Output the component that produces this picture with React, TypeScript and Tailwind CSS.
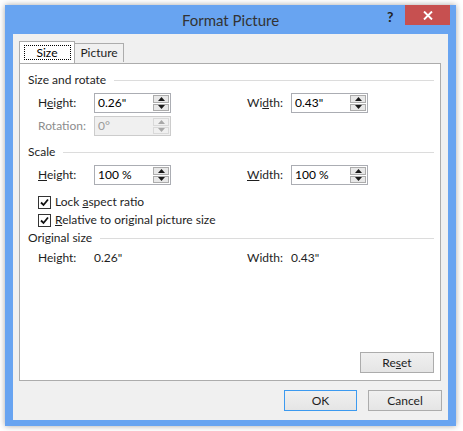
import React from "react";

const font = { fontFamily: 'Lato, "Noto Sans", "Open Sans", sans-serif' };

function Spin({ value, disabled }: { value: string; disabled?: boolean }) {
  return (
    <div
      className={`flex h-[20px] w-[77px] border ${
        disabled ? "border-[#cccccc] bg-[#f0f0f0]" : "border-[#abadb3] bg-white"
      }`}
    >
      <div
        className={`flex-1 pl-[3px] text-[12px] leading-[18px] ${
          disabled ? "text-[#9a9a9a]" : "text-[#000]"
        }`}
      >
        {value}
      </div>
      <div className="flex w-[17px] flex-col gap-[1px] py-[1px] pr-[1px]">
        {[0, 1].map((i) => (
          <div
            key={i}
            className={`flex flex-1 items-center justify-center border ${
              disabled ? "border-[#d9d9d9] bg-[#f0f0f0]" : "border-[#acacac] bg-[#e8e8e8]"
            }`}
          >
            <svg width="7" height="4" viewBox="0 0 7 4">
              <polygon
                points={i === 0 ? "0,4 7,4 3.5,0" : "0,0 7,0 3.5,4"}
                fill={disabled ? "#a8a8a8" : "#1a1a1a"}
              />
            </svg>
          </div>
        ))}
      </div>
    </div>
  );
}

function Header({ children }: { children: React.ReactNode }) {
  return (
    <div className="flex h-[16px] items-center">
      <span className="text-[12px] leading-[16px] text-[#1e1e1e]">{children}</span>
      <div className="ml-[8px] h-px flex-1 bg-[#dcdcdc]" />
    </div>
  );
}

function Check({ children }: { children: React.ReactNode }) {
  return (
    <div className="flex h-[16px] items-center pl-[10px]">
      <div className="flex h-[13px] w-[13px] items-center justify-center border border-[#333] bg-white">
        <svg width="9" height="9" viewBox="0 0 9 9">
          <path d="M1 4.5 L3.5 7 L8 1.5" stroke="#111" strokeWidth="1.8" fill="none" />
        </svg>
      </div>
      <span className="ml-[4px] text-[12px] leading-[16px] text-[#1e1e1e]">{children}</span>
    </div>
  );
}

function Btn({ children, primary }: { children: React.ReactNode; primary?: boolean }) {
  return (
    <div
      className={`flex h-[21px] items-center justify-center border bg-gradient-to-b from-[#f0f0f0] to-[#e5e5e5] text-[12px] text-[#1e1e1e] ${
        primary ? "w-[73px] border-[#3c9af0]" : "w-[74px] border-[#acacac]"
      }`}
    >
      {children}
    </div>
  );
}

export default function App() {
  return (
    <div className="h-[431px] w-[463px] bg-white pl-[5px] pt-[5px]" style={font}>
      <div className="flex h-[421px] w-[451px] flex-col bg-[#68a4f1] shadow-[0_0_6px_rgba(0,0,0,0.35)]">
        {/* Title bar */}
        <div className="relative flex h-[29px] items-center justify-center">
          <span className="text-[15px] leading-[20px] text-[#333]">Format Picture</span>
          <span className="absolute left-[382px] top-[3px] text-[14px] font-bold leading-[18px] text-[#222]">
            ?
          </span>
          <div className="absolute left-[400px] top-0 flex h-[20px] w-[45px] items-center justify-center bg-[#c75050]">
            <svg width="10" height="9" viewBox="0 0 10 9">
              <path d="M1 0.5 L9 8.5 M9 0.5 L1 8.5" stroke="white" strokeWidth="1.9" />
            </svg>
          </div>
        </div>
        {/* Content */}
        <div className="mx-[8px] mb-[6px] flex flex-1 flex-col bg-[#f0f0f0] pl-[6px] pr-[7px] pt-[8px]">
          {/* Tabs */}
          <div className="relative z-10 flex h-[21px] items-end">
            <div className="flex h-[22px] w-[56px] items-start justify-center border border-b-0 border-[#acacac] bg-white pt-[3px]">
              <div className="flex h-[15px] w-[47px] items-center justify-center border border-dotted border-[#000] text-[12px] leading-[14px] text-[#000]">
                Size
              </div>
            </div>
            <div className="mb-px flex h-[19px] w-[49px] items-center justify-center border border-b-0 border-l-0 border-[#acacac] bg-[#f0f0f0] text-[12px] text-[#1e1e1e]">
              Picture
            </div>
          </div>
          {/* Panel */}
          <div className="flex h-[318px] flex-col border border-[#acacac] bg-white pl-[8px] pr-[6px] pt-[8px] pb-[7px]">
            <Header>Size and rotate</Header>
            <div className="mt-[5px] flex h-[20px] items-center pl-[10px] text-[12px] text-[#1e1e1e]">
              <span className="w-[56px]">
                H<span className="underline">e</span>ight:
              </span>
              <Spin value={'0.26"'} />
              <span className="ml-[76px] w-[44px]">
                Wi<span className="underline">d</span>th:
              </span>
              <Spin value={'0.43"'} />
            </div>
            <div className="mt-[3px] flex h-[20px] items-center pl-[10px] text-[12px] text-[#8d8d8d]">
              <span className="w-[56px]">Rotation:</span>
              <Spin value="0°" disabled />
            </div>
            <div className="mt-[8px]">
              <Header>Scale</Header>
            </div>
            <div className="mt-[5px] flex h-[20px] items-center pl-[10px] text-[12px] text-[#1e1e1e]">
              <span className="w-[56px]">
                <span className="underline">H</span>eight:
              </span>
              <Spin value="100 %" />
              <span className="ml-[76px] w-[44px]">
                <span className="underline">W</span>idth:
              </span>
              <Spin value="100 %" />
            </div>
            <div className="mt-[9px]">
              <Check>
                Lock <span className="underline">a</span>spect ratio
              </Check>
            </div>
            <div className="mt-[2px]">
              <Check>
                <span className="underline">R</span>elative to original picture size
              </Check>
            </div>
            <div className="mt-[2px]">
              <Header>Original size</Header>
            </div>
            <div className="mt-[4px] flex h-[16px] items-center pl-[10px] text-[12px] leading-[16px] text-[#1e1e1e]">
              <span className="w-[56px]">Height:</span>
              <span className="w-[77px]">0.26"</span>
              <span className="ml-[76px] w-[44px]">Width:</span>
              <span>0.43"</span>
            </div>
            <div className="flex-1" />
            <div className="flex justify-end">
              <Btn>
                Re<span className="underline">s</span>et
              </Btn>
            </div>
          </div>
          {/* Bottom buttons */}
          <div className="mt-[9px] flex justify-end gap-[11px] pr-0">
            <Btn primary>OK</Btn>
            <div className="-mr-[1px]">
              <Btn>Cancel</Btn>
            </div>
          </div>
        </div>
      </div>
    </div>
  );
}
